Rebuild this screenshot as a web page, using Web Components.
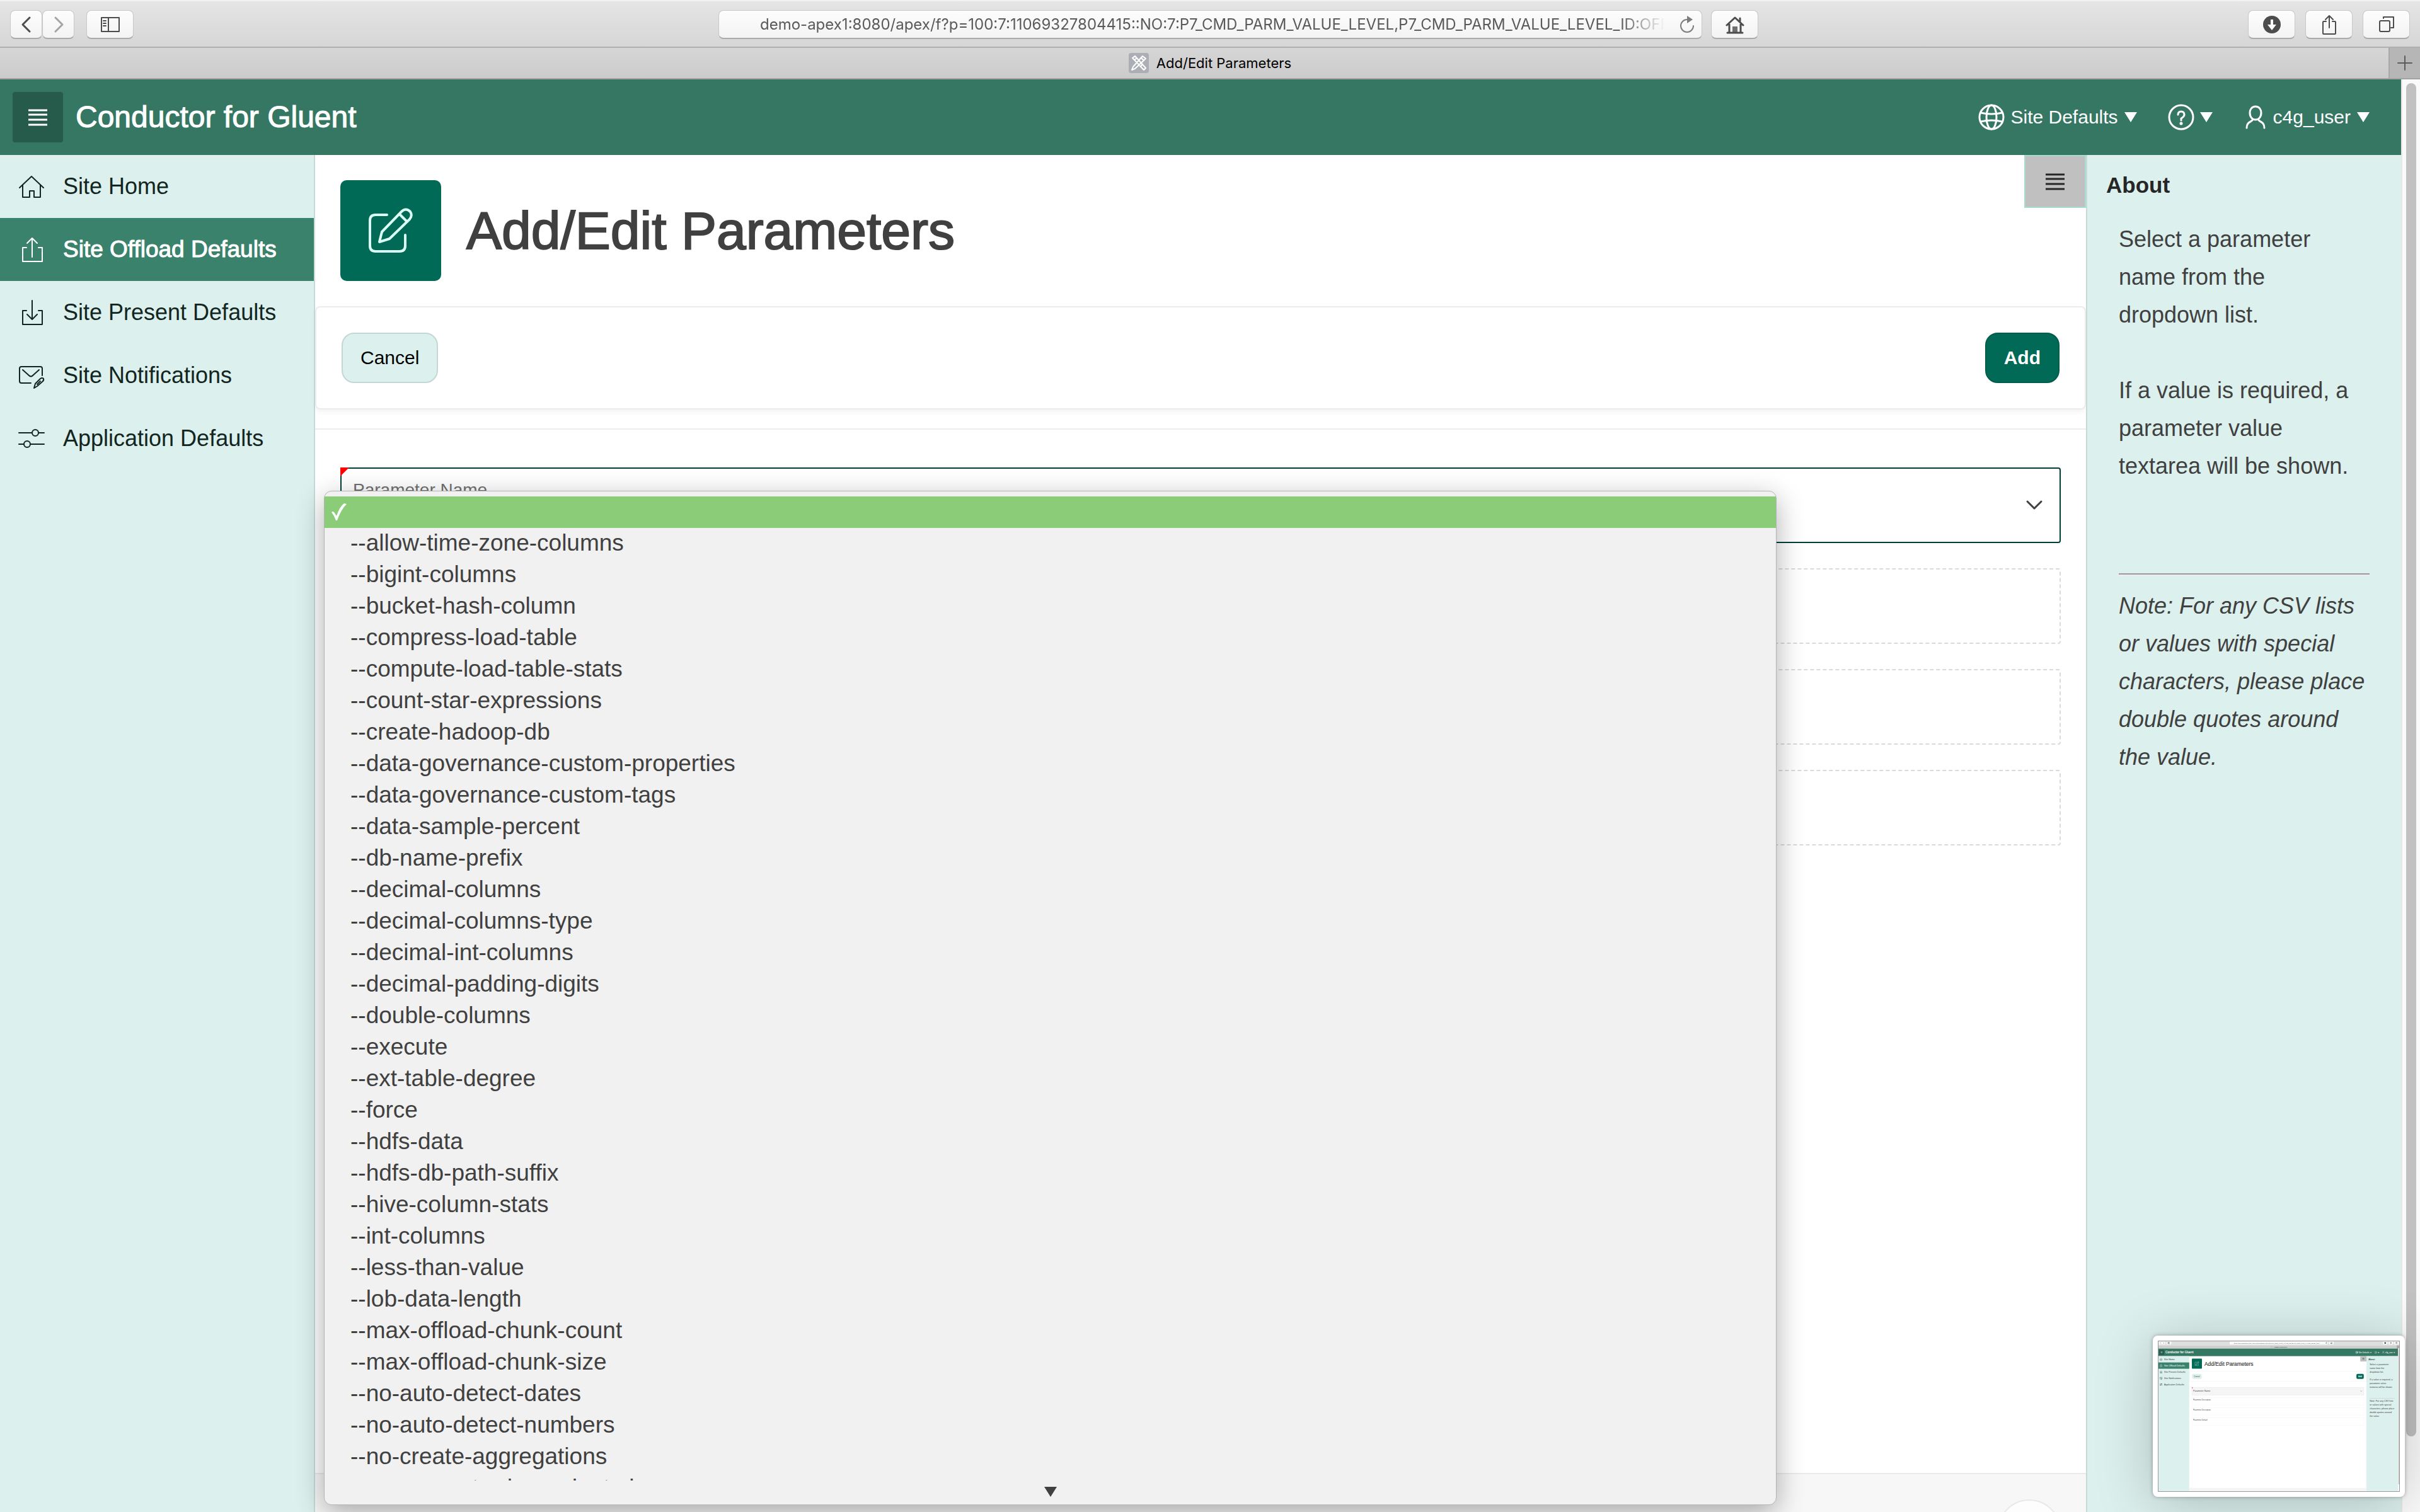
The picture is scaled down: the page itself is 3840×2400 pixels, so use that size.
<!DOCTYPE html>
<html lang="en">
<head>
<meta charset="utf-8">
<title>Add/Edit Parameters</title>
<style>
  html, body { margin: 0; height: 100%; }
  body {
    font-family: "Liberation Sans", Arial, sans-serif;
    font-size: 36px;
    color: #404040;
    background: #fff;
    overflow: hidden;
  }
</style>
</head>
<body>
<app-window>
  <browser-toolbar slot="toolbar" url="demo-apex1:8080/apex/f?p=100:7:11069327804415::NO:7:P7_CMD_PARM_VALUE_LEVEL,P7_CMD_PARM_VALUE_LEVEL_ID:OFFLOAD"></browser-toolbar>
  <browser-tabs slot="tabs">Add/Edit Parameters</browser-tabs>
  <app-header slot="header">Conductor for Gluent</app-header>
  <side-nav slot="nav">
    <nav-item icon="home">Site Home</nav-item>
    <nav-item icon="upload" current>Site Offload Defaults</nav-item>
    <nav-item icon="download">Site Present Defaults</nav-item>
    <nav-item icon="mail">Site Notifications</nav-item>
    <nav-item icon="sliders">Application Defaults</nav-item>
  </side-nav>
  <param-page slot="main">Add/Edit Parameters</param-page>
  <about-panel slot="aside"></about-panel>
  <shot-preview slot="overlay"></shot-preview>
</app-window>

<script>
const ICONS = {
  home: ['0 0 50 50', '<path d="M6 27 25 9 44 27M11 22V42H22V32H29V42H39V22"/>'],
  upload: ['0 0 50 50', '<path d="M17 22H11V44H42V22H36M26 37V7M18 15 26 7 34 15"/>'],
  download: ['0 0 50 50', '<path d="M17 22H11V44H42V22H36M26 6V36M18 28 26 36 34 28"/>'],
  mail: ['0 0 50 50', '<path d="M24 37H9Q6 37 6 34V14Q6 11 9 11H39Q42 11 42 14V25M11 16 21 25Q24 28 27 25L37 16M29 45 31 38 39 30Q42 28 44 30 45 33 42 35L34 42ZM34 39 39 34"/>'],
  sliders: ['0 0 50 50', '<path d="M5 16H26M36 16H45M5 34H13M23 34H45"/><circle cx="31" cy="16" r="5"/><circle cx="18" cy="34" r="5"/>'],
  bars: ['0 0 30 30', '<path d="M0 4H30M0 11H30M0 19H30M0 27H30"/>'],
  edit: ['0 0 72 72', '<path d="M30 11H12Q3 11 3 20V60Q3 69 12 69H50Q59 69 59 60V43M18 54 22 38 53 6Q60 -1 67 6 71 12 66 18L34 49ZM50 10 62 22"/>'],
  globe: ['0 0 44 44', '<circle cx="22" cy="22" r="19"/><ellipse cx="22" cy="22" rx="8" ry="19"/><path d="M5 15Q22 19 39 15M5 29Q22 25 39 29"/>'],
  help: ['0 0 44 44', '<circle cx="22" cy="22" r="19"/><path d="M17 18Q17 13 22 13 27 13 27 18 27 21 22 24V27" stroke-width="3"/><circle cx="22" cy="32" r="1" fill="currentColor"/>'],
  user: ['0 0 40 40', '<path d="M20 3C26 3 29 8 29 13 29 20 25 24 20 24 15 24 11 20 11 13 11 8 14 3 20 3ZM16 23C15 28 6 26 6 37M24 23C25 28 34 26 34 37"/>'],
  caret: ['0 0 20 16', '<path d="M0 0H20L10 16Z" fill="currentColor" stroke="none"/>'],
  chevron: ['0 0 40 40', '<path d="M9 14 20 25 31 14"/>'],
  up: ['0 0 40 40', '<path d="M9 26 20 15 31 26"/>'],
  back: ['0 0 40 40', '<path d="M25 9 14 20 25 31"/>'],
  fwd: ['0 0 40 40', '<path d="M15 9 26 20 15 31"/>'],
  panel: ['0 0 40 40', '<path d="M6 9H34V31H6ZM17 9V31"/><path d="M9 14H13M9 18H13M9 22H13" stroke-width="2"/>'],
  reload: ['0 0 30 30', '<path d="M15 7A10 10 0 1 0 25 17"/><path d="M15 1 24 7 15 13Z" fill="currentColor" stroke="none"/>'],
  house: ['0 0 30 30', '<path d="M2 16 15 4 28 16M6 14V28M24 14V28M3 28H27M23 5V10"/><path d="M11 18H19V28H11Z" fill="currentColor" stroke="none" opacity=".8"/>'],
  dl: ['0 0 30 30', '<circle cx="15" cy="15" r="14" fill="currentColor" stroke="none"/><path d="M13 7H17V15H22L15 24 8 15H13Z" fill="#fff" stroke="none"/>'],
  share: ['0 0 30 34', '<path d="M10 12H6Q5 12 5 13V31Q5 32 6 32H24Q25 32 25 31V13Q25 12 24 12H20M15 22V3M9 9 15 3 21 9"/>'],
  tabs: ['0 0 30 30', '<rect x="4" y="9" width="16" height="17" rx="2"/><path d="M10 5V3H26V20H22"/>'],
  plus: ['0 0 24 24', '<path d="M12 1V23M1 12H23"/>'],
  apex: ['0 0 32 32', '<rect width="32" height="32" rx="4" fill="#abaeb4" stroke="none"/><path d="M6 8 10 5 27 24 24 27ZM22 5 27 9 10 25 5 27 7 22ZM20 8 24 12M9 11 12 9M19 21 22 18"/>'],
  check: ['0 0 24 28', '<path d="M0 14Q3 11 6 17L8 20Q13 5 20 0L24 1Q15 10 9 27H7Q4 19 0 14Z" fill="currentColor" stroke="none"/>']
};
const icon = (name, w, h = w, sw = 2, extra = '') =>
  `<svg ${extra} width="${w}" height="${h}" viewBox="${ICONS[name][0]}" fill="none" stroke="currentColor" stroke-width="${sw}" stroke-linecap="round" stroke-linejoin="round" aria-hidden="true">${ICONS[name][1]}</svg>`;

const BASE = `
  *, *::before, *::after { box-sizing: border-box; }
  svg { display: block; flex: none; }
  button { font: inherit; color: inherit; margin: 0; padding: 0; border: 0; background: none; display: flex; align-items: center; justify-content: center; }
  h1, h2, p, ul { margin: 0; padding: 0; font-weight: 400; }
  ul { list-style: none; }
`;

const define = (tag, render) => customElements.define(tag, class extends HTMLElement {
  constructor() {
    super();
    this.attachShadow({ mode: 'open' });
  }
  connectedCallback() {
    this.shadowRoot.innerHTML = `<style>${BASE}</style>` + render(this);
  }
});

define('app-window', () => `
  <style>
    :host { display: flex; flex-direction: column; height: 100vh; position: relative; overflow: hidden; }
    .view { flex: 1; display: flex; min-height: 0; }
    .page { flex: 1; display: flex; flex-direction: column; min-width: 0; }
    .cols { flex: 1; display: flex; min-height: 0; }
    .track { width: 30px; padding: 6px 6px 120px; border-left: 2px solid #e8e8e8; background: #fafafa; }
    .thumb { height: 100%; width: 16px; border-radius: 8px; background: #c1c1c1; }
    slot[name=main]::slotted(*) { flex: 1; min-width: 0; }
  </style>
  <slot name="toolbar"></slot>
  <slot name="tabs"></slot>
  <div class="view">
    <div class="page">
      <slot name="header"></slot>
      <div class="cols">
        <slot name="nav"></slot>
        <slot name="main"></slot>
        <slot name="aside"></slot>
      </div>
    </div>
    <div class="track"><div class="thumb"></div></div>
  </div>
  <slot name="overlay"></slot>
`);

define('browser-toolbar', el => `
  <style>
    :host { display: grid; grid-template-columns: 1124px 1fr 1034px; align-items: center; height: 76px; flex: none; padding: 2px 16px 0; box-sizing: border-box;
      background: linear-gradient(#e5e5e5, #d6d6d6); border-top: 2px solid #f2f2f2; border-bottom: 2px solid #b0b0b0;
      font-family: Inter, Roboto, sans-serif; color: #4c4c4c; }
    .group { display: flex; align-items: center; }
    .end { justify-content: flex-end; gap: 16px; }
    .mid { gap: 14px; }
    button.b, .url { height: 46px; border-radius: 8px; border: 1px solid #c8c8c8; border-bottom: 2px solid #aaa; background: linear-gradient(#fdfdfd, #f3f3f3); }
    .pair { width: 51px; } .pair.n { color: #a5a5a5; }
    .side { width: 75px; margin-left: 19px; }
    .wide { width: 75px; }
    .url { flex: 1; display: flex; align-items: center; padding: 0 8px 0 65px; }
    input { flex: 1; min-width: 0; border: 0; padding: 0; background: none; outline: 0; font: 24px/40px Inter, Roboto, sans-serif; color: #5a5a5a;
      -webkit-mask-image: linear-gradient(90deg, #000 calc(100% - 70px), transparent 100%); mask-image: linear-gradient(90deg, #000 calc(100% - 70px), transparent 100%); }
    .reload { color: #7d7d7d; margin-left: 20px; }
  </style>
  <div class="group">
    <button class="b pair" aria-label="Back">${icon('back', 40, 40, 3)}</button>
    <button class="b pair n" aria-label="Forward">${icon('fwd', 40, 40, 3)}</button>
    <button class="b side" aria-label="Show sidebar">${icon('panel', 40)}</button>
  </div>
  <div class="group mid">
    <div class="url">
      <input type="text" aria-label="Address" value="${el.getAttribute('url')}">
      <button class="reload" aria-label="Reload">${icon('reload', 30, 30, 2)}</button>
    </div>
    <button class="b wide" aria-label="Home page">${icon('house', 30, 30, 3)}</button>
  </div>
  <div class="group end">
    <button class="b wide" aria-label="Downloads">${icon('dl', 30)}</button>
    <button class="b wide" aria-label="Share">${icon('share', 30, 34)}</button>
    <button class="b wide" aria-label="Tab overview">${icon('tabs', 30)}</button>
  </div>
`);

define('browser-tabs', () => `
  <style>
    :host { display: flex; height: 50px; flex: none; box-sizing: border-box; background: linear-gradient(#d6d6d6, #cbcbcb); border-bottom: 2px solid #a2a2a2;
      font-family: Inter, Roboto, sans-serif; font-size: 22px; color: #000; }
    .tab { flex: 1; display: flex; align-items: center; justify-content: center; gap: 12px; padding-left: 50px; color: #fff; }
    .tab span { color: #000; }
    .new { width: 50px; background: #b6b6b6; border-left: 2px solid #a8a8a8; color: #5c5c5c; }
  </style>
  <div class="tab">${icon('apex', 32)}<span><slot></slot></span></div>
  <button class="new" aria-label="New tab">${icon('plus', 24)}</button>
`);

define('app-header', () => `
  <style>
    :host { display: flex; align-items: center; height: 120px; flex: none; box-sizing: border-box; padding: 0 50px 0 20px; background: #367764; color: #fff; }
    .menu { width: 80px; height: 80px; border-radius: 4px; background: #265a4b; }
    h1 { margin-left: 20px; font-size: 48px; line-height: 60px; -webkit-text-stroke: 1px; }
    nav { margin-left: auto; display: flex; gap: 48px; font-size: 30px; line-height: 40px; }
    nav button { gap: 8px; }
    nav .t { margin-right: 2px; }
  </style>
  <button class="menu" aria-label="Navigation">${icon('bars', 30, 30, 3)}</button>
  <h1><slot></slot></h1>
  <nav>
    <button>${icon('globe', 44, 44, 3)}<span class="t">Site Defaults</span>${icon('caret', 20, 16)}</button>
    <button aria-label="Help">${icon('help', 44, 44, 3)}${icon('caret', 20, 16)}</button>
    <button>${icon('user', 40, 40, 3)}<span class="t">c4g_user</span>${icon('caret', 20, 16)}</button>
  </nav>
`);

define('side-nav', () => `
  <style>
    :host { display: block; width: 500px; flex: none; box-sizing: border-box; background: #dcf0ed; border-right: 2px solid #c6dbd7; }
  </style>
  <nav><slot></slot></nav>
`);

define('nav-item', el => `
  <style>
    :host { display: block; color: #12261f; }
    :host([current]) { background: #3a826c; color: #fff; font-size: 37px; -webkit-text-stroke: 1px; }
    a { display: flex; align-items: center; gap: 25px; height: 100px; padding-left: 25px; color: inherit; text-decoration: none; }
  </style>
  <a href="#">${icon(el.getAttribute('icon'), 50)}<span><slot></slot></span></a>
`);

define('param-page', () => `
  <style>
    :host { display: flex; flex-direction: column; background: #fff; }
    .hero { display: flex; align-items: flex-start; height: 240px; }
    .title { flex: 1; display: flex; align-items: center; gap: 40px; padding: 40px; }
    .badge { width: 160px; height: 160px; border-radius: 10px; background: #006a56; color: #dcfff6; display: flex; align-items: center; justify-content: center; }
    h2 { font-size: 84px; line-height: 100px; -webkit-text-stroke: 2px; }
    .toggle { width: 98px; height: 84px; background: #c1c0c0; border: 2px solid #a9dccf; color: #262626; }
    .bar { display: flex; align-items: center; justify-content: space-between; padding: 40px; border: 2px solid #ececec; border-radius: 8px; box-shadow: 0 4px 8px rgba(0,0,0,.05); }
    .bar button { height: 80px; padding: 0 28px; border-radius: 20px; font-size: 30px; border: 2px solid #c3d8d3; }
    .cancel { background: #dcf0ed; color: #000; }
    .bar .add { background: #006a56; color: #fff; border-color: #005c4a; font-weight: 700; }
    form { flex: 1; display: flex; flex-direction: column; gap: 40px; margin-top: 30px; padding: 60px 40px; border-top: 2px solid #ececec; min-height: 0; }
    .ro { height: 120px; flex: none; border: 2px dashed #dadada; border-radius: 4px; }
    footer { display: flex; justify-content: flex-end; height: 62px; flex: none; padding: 40px 40px 0; border-top: 2px solid #eaeaea; background: #f7f7f7; overflow: hidden; }
    footer button { width: 100px; height: 100px; flex: none; border: 2px solid #e8e8e8; border-radius: 50%; background: #fdfdfd; color: #404040; }
  </style>
  <div class="hero">
    <div class="title"><div class="badge">${icon('edit', 72, 72, 4)}</div><h2><slot></slot></h2></div>
    <button class="toggle" aria-label="Toggle side column">${icon('bars', 30, 30, 3)}</button>
  </div>
  <div class="bar"><button class="cancel">Cancel</button><button class="add">Add</button></div>
  <form>
    <param-select label="Parameter Name"></param-select>
    <div class="ro"></div><div class="ro"></div><div class="ro"></div>
  </form>
  <footer><button aria-label="Start of page">${icon('up', 40)}</button></footer>
`);

const OPTIONS = ['allow-time-zone-columns', 'bigint-columns', 'bucket-hash-column', 'compress-load-table', 'compute-load-table-stats',
  'count-star-expressions', 'create-hadoop-db', 'data-governance-custom-properties', 'data-governance-custom-tags', 'data-sample-percent',
  'db-name-prefix', 'decimal-columns', 'decimal-columns-type', 'decimal-int-columns', 'decimal-padding-digits', 'double-columns', 'execute',
  'ext-table-degree', 'force', 'hdfs-data', 'hdfs-db-path-suffix', 'hive-column-stats', 'int-columns', 'less-than-value', 'lob-data-length',
  'max-offload-chunk-count', 'max-offload-chunk-size', 'no-auto-detect-dates', 'no-auto-detect-numbers', 'no-create-aggregations',
  'no-generate-dependent-views'];

define('param-select', el => `
  <style>
    :host { display: block; position: relative; flex: none; }
    .field { display: flex; align-items: center; height: 120px; padding: 0 20px 0 18px; border: 2px solid #003f37; border-radius: 4px; background: #fff; }
    .stack { flex: 1; display: flex; flex-direction: column; }
    label { font-size: 28px; line-height: 36px; color: #707070; }
    select { appearance: none; border: 0; outline: 0; padding: 0; height: 48px; background: none; font: inherit; color: inherit; }
    .req { position: absolute; top: 0; left: 0; width: 14px; height: 14px; background: #f00; clip-path: polygon(0 0, 100% 0, 0 100%); }
    .popup { position: absolute; top: 37px; left: -26px; width: calc(100% - 425px); z-index: 2; display: flex; flex-direction: column;
      padding-top: 8px; border: 1px solid #b4b4b4; border-radius: 12px; background: #f1f1f1; box-shadow: 0 12px 44px rgba(0,0,0,.32); }
    ul { height: 1562px; overflow: hidden; font-size: 37px; line-height: 48px; }
    li { height: 50px; padding-left: 41px; }
    li.sel { display: flex; align-items: center; background: #8bcc78; color: #fff; padding-left: 11px; }
    .more { display: flex; justify-content: center; height: 38px; padding-top: 10px; }
  </style>
  <div class="field">
    <div class="stack"><label for="p">${el.getAttribute('label')}</label><select id="p"><option></option></select></div>
    ${icon('chevron', 40, 40, 3)}
  </div>
  <div class="req"></div>
  <div class="popup">
    <ul role="listbox">
      <li class="sel" role="option" aria-selected="true">${icon('check', 24, 28)}</li>
      ${OPTIONS.map(o => `<li role="option">--${o}</li>`).join('')}
    </ul>
    <div class="more">${icon('caret', 20, 16)}</div>
  </div>
`);

define('about-panel', () => `
  <style>
    :host { display: block; width: 500px; flex: none; box-sizing: border-box; padding: 18px 50px 0 30px; background: #dcf0ed; border-left: 2px solid #c6dbd7; }
    h2 { font-size: 35px; line-height: 60px; font-weight: 700; color: #262626; }
    .text { padding: 26px 0 0 20px; line-height: 60px; }
    p + p { margin-top: 60px; }
    hr { margin: 140px 0 18px; height: 4px; border: 0; border-top: 2px solid #9a9a9a; border-bottom: 2px solid #eee; }
    em { font-style: italic; }
  </style>
  <h2>About</h2>
  <div class="text">
    <p>Select a parameter name from the dropdown list.</p>
    <p>If a value is required, a parameter value textarea will be shown.</p>
    <hr>
    <p class="note"><em>Note: For any CSV lists or values with special characters, please place double quotes around the value.</em></p>
  </div>
`);

define('shot-preview', () => {
  const t = (x, y, size, text, extra = '') => `<text x="${x}" y="${y}" font-size="${size}" ${extra}>${text}</text>`;
  const r = (x, y, w, h, fill, extra = '') => `<rect x="${x}" y="${y}" width="${w}" height="${h}" fill="${fill}" ${extra}/>`;
  const at = (n, x, y, w, sw = 3, c = '#12261f') => icon(n, w, w, sw, `x="${x}" y="${y}" color="${c}"`);
  return `
  <style>
    :host { display: block; position: absolute; right: 24px; bottom: 24px; z-index: 3; padding: 8px; border-radius: 8px; background: #fff;
      box-shadow: 0 0 6px rgba(0,0,0,.3), 0 10px 90px rgba(0,0,0,.22); }
    .shot { display: block; width: 384px; height: 240px; outline: 1px solid #999; outline-offset: -1px; }
  </style>
  <svg class="shot" viewBox="0 0 3840 2400" font-size="36" fill="#404040" font-family="Liberation Sans, Arial, sans-serif" role="img" aria-label="Screenshot preview">
    ${r(0, 0, 3840, 2400, '#fff')}
    ${r(0, 0, 3840, 76, '#dedede')}${r(0, 76, 3840, 50, '#cfcfcf')}${r(3790, 76, 50, 50, '#aaa')}
    ${[[16, 50], [68, 50], [137, 76], [1140, 1560], [2716, 75], [3570, 75], [3660, 75], [3750, 75]].map(([x, w]) => r(x, 16, w, 46, '#fafafa', 'rx="8"')).join('')}
    ${at('back', 22, 18, 40)}${at('fwd', 74, 18, 40)}${at('panel', 155, 18, 40)}${at('reload', 2660, 22, 30)}${at('house', 2738, 22, 30)}${at('dl', 3592, 22, 30)}${at('share', 3682, 22, 30)}${at('tabs', 3772, 22, 30)}
    ${t(1207, 48, 23, 'demo-apex1:8080/apex/f?p=100:7:11069327804415::NO:7:P7_CMD_PARM_VALUE_LEVEL,P7_CMD_PARM_VALUE_LEVEL_ID:O')}
    ${at('apex', 1791, 84, 32, 2, '#fff')}${t(1836, 108, 23, 'Add/Edit Parameters', 'fill="#000"')}
    ${r(0, 126, 3810, 120, '#367764')}${r(20, 146, 80, 80, '#265a4b')}${at('bars', 45, 171, 30, 3, '#fff')}
    <g fill="#fff">${t(120, 202, 48, 'Conductor for Gluent', 'stroke="#fff"')}${t(3187, 196, 30, 'Site Defaults ▼')}${t(3487, 196, 30, '▼')}${t(3607, 196, 30, 'c4g_user ▼')}</g>
    ${at('globe', 3135, 164, 44, 3, '#fff')}${at('help', 3435, 164, 44, 3, '#fff')}${at('user', 3557, 166, 40, 3, '#fff')}
    ${r(0, 246, 498, 2154, '#dcf0ed')}${r(0, 346, 498, 100, '#3a826c')}
    ${at('home', 25, 271, 50)}${at('upload', 25, 371, 50, 3, '#fff')}${at('download', 25, 471, 50)}${at('mail', 25, 571, 50)}${at('sliders', 25, 671, 50)}
    ${t(100, 308, 36, 'Site Home')}${t(100, 408, 36, 'Site Offload Defaults', 'fill="#fff"')}${t(100, 508, 36, 'Site Present Defaults')}${t(100, 608, 36, 'Site Notifications')}${t(100, 708, 36, 'Application Defaults')}
    ${r(540, 286, 160, 160, '#006a56', 'rx="10"')}${at('edit', 584, 330, 72, 4, '#dcfff6')}${t(740, 396, 84, 'Add/Edit Parameters', 'stroke="#404040" stroke-width="2"')}
    ${r(3212, 246, 98, 84, '#c1c0c0')}${at('bars', 3246, 273, 30)}
    ${r(501, 487, 2808, 162, '#fff', 'stroke="#ececec" stroke-width="4"')}${r(542, 528, 153, 80, '#dcf0ed', 'rx="20"')}${t(573, 578, 30, 'Cancel')}
    ${r(3151, 528, 117, 80, '#006a56', 'rx="20"')}${t(3180, 578, 30, 'Add', 'fill="#fff" font-weight="700"')}
    ${r(540, 742, 2730, 120, '#f5f5f5', 'stroke="#e4e4e4" stroke-width="4"')}${r(540, 742, 12, 12, '#f00')}${at('chevron', 3208, 782, 40)}
    ${t(560, 813, 36, 'Parameter Name')}
    <g fill="none" stroke="#eee" stroke-width="3">${[902, 1062, 1222].map(y => r(540, y, 2730, 120, 'none')).join('')}</g>
    ${t(560, 947, 28, 'Parameter Description')}${t(560, 1107, 28, 'Parameter Description')}${t(560, 1267, 28, 'Parameter Default')}
    ${r(498, 2338, 2812, 62, '#f5f5f5')}
    ${r(3310, 246, 500, 2154, '#dcf0ed')}${t(3342, 306, 35, 'About', 'font-weight="700"')}
    ${['Select a parameter', 'name from the', 'dropdown list.', '', 'If a value is required, a', 'parameter value', 'textarea will be shown.'].map((s, i) => s && t(3362, 392 + i * 60, 36, s)).join('')}
    ${r(3362, 910, 398, 4, '#bbb')}
    ${['Note: For any CSV lists', 'or values with special', 'characters, please place', 'double quotes around', 'the value.'].map((s, i) => t(3362, 974 + i * 60, 36, s)).join('')}
    ${r(3810, 126, 30, 2274, '#fafafa')}${r(3818, 132, 16, 2148, '#c1c1c1', 'rx="8"')}
  </svg>`;
});
</script>
</body>
</html>
